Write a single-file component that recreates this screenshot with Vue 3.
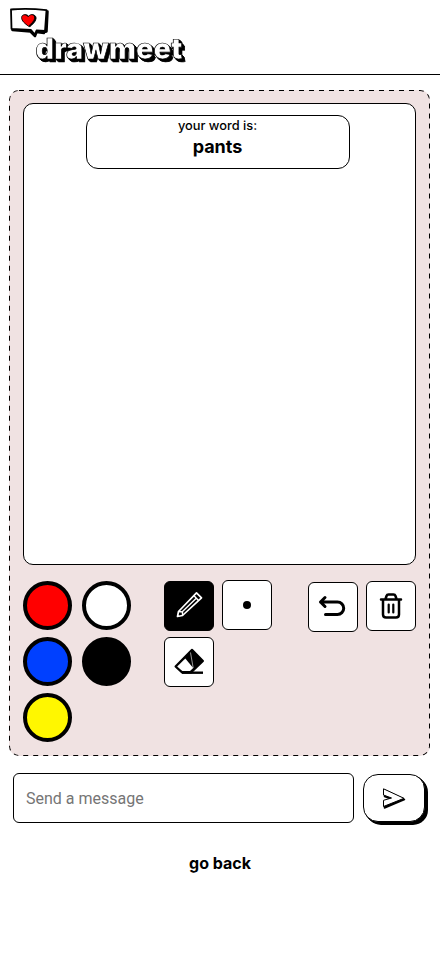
<script setup>
import { ref } from 'vue'

const word = ref('pants')
const message = ref('')
const colors = ['#ff0000', '#ffffff', '#0040ff', '#000000', '#fff700']
</script>

<template>
  <div class="page">
    <header class="header">
      <svg class="logo" width="200" height="72" viewBox="0 0 200 72" role="img" aria-label="drawmeet">
        <path d="M13 10 47.500 11.500 46.500 31.500 44 32 44 33 36.500 32 35 36 30.500 31.500 12.500 30Z" fill="#000" stroke="#000" stroke-width="2.500" stroke-linejoin="round" />
        <path d="M11 9.500Q28 8 46.500 10.200L45 31 36.500 30.500 34.800 34.500 31 30 11.500 28.800Z" fill="#fff" stroke="#000" stroke-width="1.800" stroke-linejoin="round" />
        <path d="M29.800 26.700C26.300 24 22.800 21.500 23 17.800C23.200 14.300 27 13.800 29.300 16.900C31.500 13.300 36.500 14.800 36 18.700C35.600 21.800 32.300 24.500 29.800 26.700Z" fill="#000" stroke="#000" />
        <path d="M28.500 26.200C25 23.700 21.500 20.900 21.600 17.500C21.800 14.200 25.900 13.700 28.200 16.700C30.400 13.300 35.200 14.400 34.700 18.200C34.300 21.100 31 23.900 28.500 26.200Z" fill="#f00" stroke="#000" stroke-width=".9" />
        <text x="35.600" y="59" textLength="147" lengthAdjust="spacingAndGlyphs" class="wordmark">drawmeet</text>
      </svg>
    </header>

    <main class="panel">
      <svg class="outline" aria-hidden="true">
        <rect width="100%" height="100%" rx="10" fill="none" stroke="#000" stroke-width="2" stroke-dasharray="5 5" />
      </svg>
      <section class="canvas">
        <div class="word">
          <span class="hint">your word is:</span>
          <strong>{{ word }}</strong>
        </div>
      </section>

      <section class="tools">
        <div class="colors">
          <button v-for="c in colors" :key="c" class="swatch" :style="{ background: c }"></button>
        </div>
        <div class="brushes">
          <button class="tool active" aria-label="Pencil">
            <svg width="50" height="50" viewBox="0 0 50 50" fill="none" stroke="#fff" stroke-width="1.700" stroke-linejoin="round">
              <path d="M32.500 11.800 37.500 16.800 18.500 34.500 13.500 35.500 14.500 30.500Z" />
              <path d="M29.800 14.500 34.500 19.500M14.500 30.500 18.500 31 18.500 34.500M17.500 31.500 32 17.500" stroke-width="1.400" />
            </svg>
          </button>
          <button class="tool size" aria-label="Brush size"><i class="dot"></i></button>
          <button class="tool" aria-label="Eraser">
            <svg width="50" height="50" viewBox="0 0 50 50">
              <path d="M28 12.800 39 24 27 35.500H18L11.500 29.500Z" fill="#000" stroke="#000" stroke-width="2" stroke-linejoin="round" />
              <path d="M21.300 21.500 13.200 29.500 18.300 34H26L29.200 31Z" fill="#fff" />
              <path d="M26.500 15.500 29.200 31" fill="none" stroke="#fff" stroke-width=".6" />
              <path d="M18 35.700H39" fill="none" stroke="#000" stroke-width="2.400" />
            </svg>
          </button>
        </div>
        <div class="actions">
          <button class="tool undo" aria-label="Undo">
            <svg width="50" height="50" viewBox="0 0 50 50" fill="none" stroke="#000" stroke-width="3" stroke-linecap="round" stroke-linejoin="round">
              <path d="M17 15.500 12.500 20 17 24.500M12.500 20H29.500A6.200 6.200 0 0 1 29.500 32.400H17.500" />
            </svg>
          </button>
          <button class="tool trash" aria-label="Clear">
            <svg width="50" height="50" viewBox="0 0 50 50" fill="none" stroke="#000" stroke-width="2.500" stroke-linecap="round" stroke-linejoin="round">
              <path d="M15 18.500H35M19.500 18 20.500 15Q21 13.500 22.500 13.500H27.500Q29 13.500 29.500 15L30.500 18M17 19V33.500Q17 36.500 20 36.500H30Q33 36.500 33 33.500V19" />
              <path d="M22.700 23.500V31.500M27.300 23.500V31.500" stroke-width="2.200" />
            </svg>
          </button>
        </div>
      </section>
    </main>

    <form class="composer" @submit.prevent>
      <input v-model="message" class="message" placeholder="Send a message" />
      <button class="send" aria-label="Send">
        <svg width="30" height="26" viewBox="0 0 30 26" stroke-linejoin="round">
          <path d="M5.500 5 25.500 14.500 5.500 23V17L13.500 14.500 5.500 11.500Z" fill="#000" stroke="#000" stroke-width="1.500" />
          <path d="M4.500 3.800 25 13.300 4.500 21.500V15.300L12.500 13 4.500 10Z" fill="#fff" stroke="#000" stroke-width="1" />
        </svg>
      </button>
    </form>

    <a class="back">go back</a>
  </div>
</template>

<style>
body {
  margin: 0;
  background: #fff;
}
</style>

<style scoped>
.page {
  display: flex;
  flex-direction: column;
  height: 956px;
  font-family: Inter, sans-serif;
  color: #000;
}

.page * {
  box-sizing: border-box;
}

button {
  padding: 0;
  font: inherit;
}

svg {
  display: block;
}

.header {
  height: 75px;
  border-bottom: 1px solid #000;
}

.wordmark {
  font-family: Inter, sans-serif;
  font-weight: 900;
  font-size: 29px;
  fill: #fff;
  stroke: #000;
  stroke-width: 0.700px;
  filter: drop-shadow(1px 1px 0 #000) drop-shadow(1px 1px 0 #000) drop-shadow(1px 1px 0 #000);
}

.panel {
  position: relative;
  height: 666px;
  margin: 15px 10px 0 9px;
  padding: 13px 14px;
  border-radius: 10px;
  background: #f0e2e2;
}

.outline {
  position: absolute;
  inset: 0;
  width: 100%;
  height: 100%;
  border-radius: 10px;
  overflow: hidden;
  pointer-events: none;
}

.canvas {
  display: flex;
  justify-content: center;
  align-items: flex-start;
  height: 462px;
  padding: 11px 4px 0 0;
  border: 1px solid #000;
  border-radius: 10px;
  background: #fff;
}

.word {
  display: flex;
  flex-direction: column;
  align-items: center;
  width: 264px;
  height: 54px;
  border: 1px solid #000;
  border-radius: 12px;
  font-size: 18px;
  line-height: 22px;
}

.word strong {
  margin-top: 1px;
}

.hint {
  font-size: 12.800px;
  font-weight: 500;
  line-height: 19px;
}

.tools {
  display: flex;
  align-items: flex-start;
  padding-top: 16px;
}

.colors {
  display: grid;
  grid-template-columns: 49px 49px;
  gap: 7px 10px;
}

.swatch {
  width: 49px;
  height: 49px;
  border: 4px solid #000;
  border-radius: 50%;
}

.brushes {
  display: grid;
  grid-template-columns: 50px 50px;
  gap: 6px 8px;
  margin-left: 33px;
}

.tool {
  display: flex;
  align-items: center;
  justify-content: center;
  width: 50px;
  height: 50px;
  border: 1px solid #000;
  border-radius: 6px;
  background: #fff;
}

.tool svg {
  flex: none;
}

.active {
  background: #000;
}

.size {
  margin-top: -1px;
}

.dot {
  width: 8px;
  height: 8px;
  border-radius: 50%;
  background: #000;
}

.actions {
  display: flex;
  gap: 8px;
  margin-left: auto;
}

.undo {
  margin-top: 1px;
}

.composer {
  display: flex;
  gap: 9px;
  padding: 17px 12px 0 13px;
}

.message {
  width: 341px;
  height: 50px;
  padding: 0 12px;
  border: 1px solid #000;
  border-radius: 6px;
  outline: none;
  font: 16px Roboto, sans-serif;
  background: #fff;
}

.message::placeholder {
  color: #757575;
}

.send {
  display: flex;
  align-items: center;
  justify-content: center;
  width: 62px;
  height: 48px;
  margin-top: 1px;
  border: 1px solid #000;
  border-radius: 15px;
  background: #fff;
  box-shadow: 1px 1px #000, 2px 2px #000, 3px 3px #000;
}

.back {
  align-self: center;
  margin-top: 30px;
  font-size: 16px;
  font-weight: 700;
  line-height: 20px;
}
</style>
